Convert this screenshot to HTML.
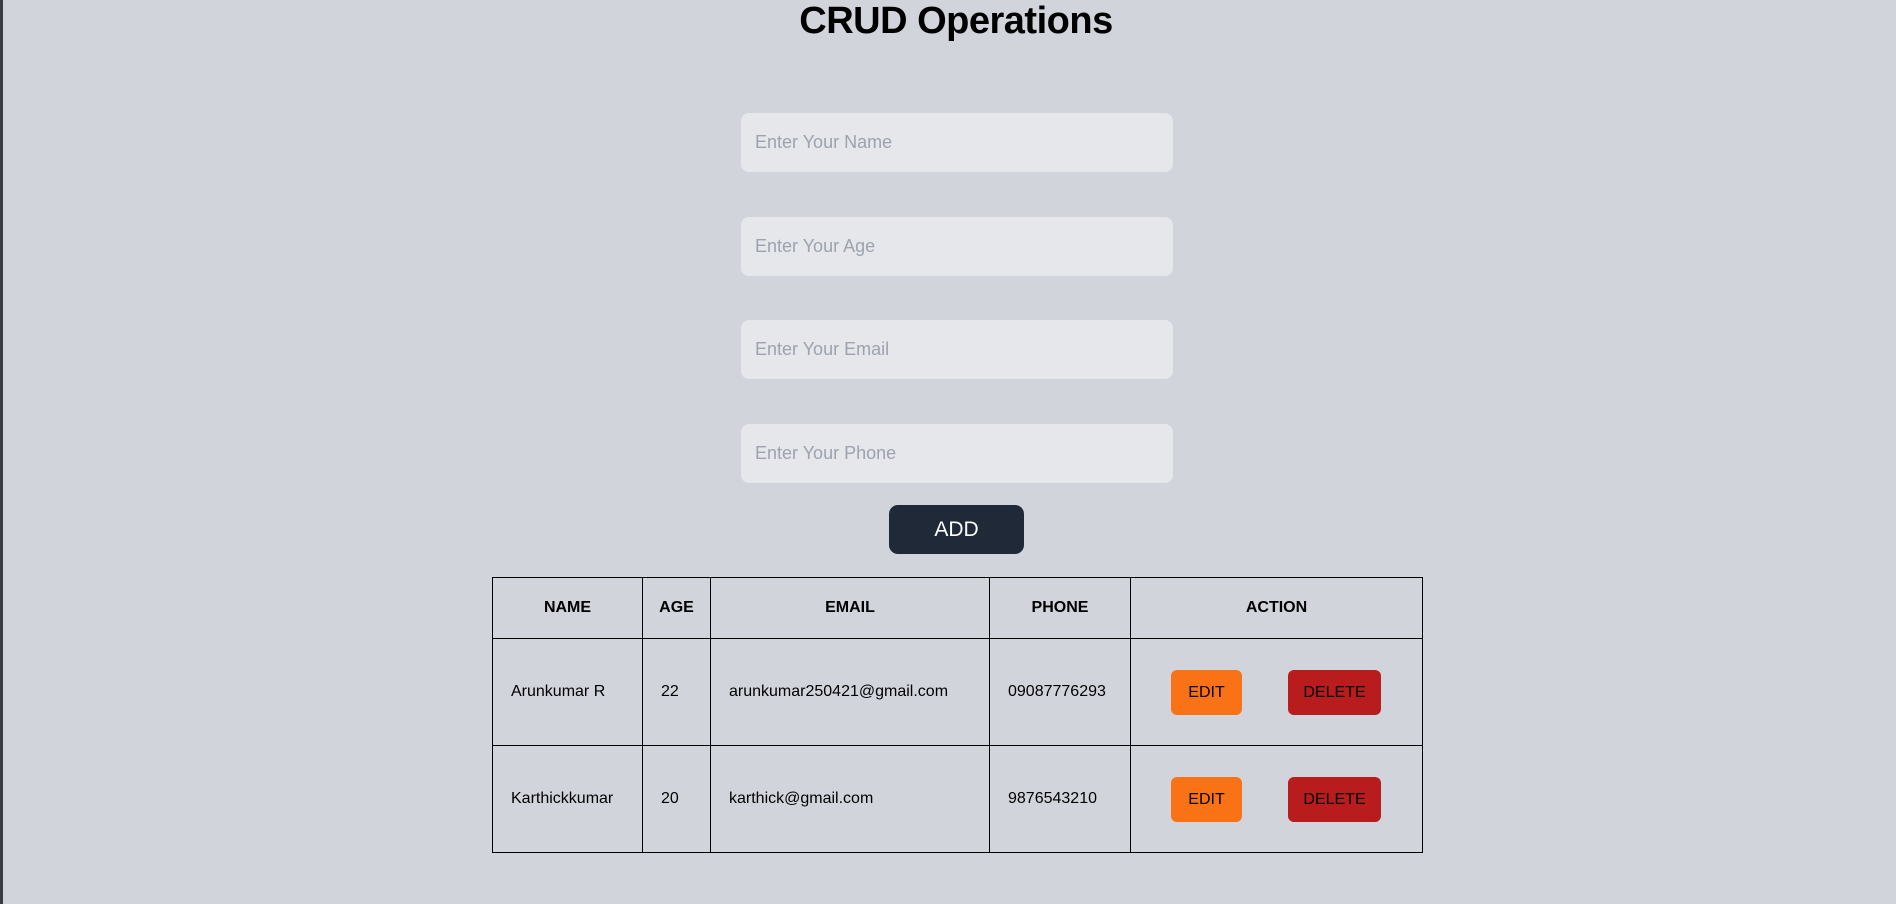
<!DOCTYPE html>
<html><head><meta charset="utf-8"><style>
html,body{margin:0;padding:0;}
body{width:1896px;height:904px;background:#d1d5db;position:relative;overflow:hidden;font-family:"Liberation Sans",sans-serif;}
.lb{position:absolute;left:0;top:0;width:3px;height:904px;background:#3a3d42;}
h1{position:absolute;left:0;width:1912px;top:0;margin:0;text-align:center;font-size:38px;font-weight:bold;line-height:42px;color:#000;letter-spacing:-0.5px;}
.in{position:absolute;left:741px;width:432px;height:59px;background:#e5e7eb;border-radius:8px;color:#9ca3af;font-size:18px;line-height:59px;text-indent:14px;}
.add{position:absolute;left:889px;top:505px;width:135px;height:49px;background:#1f2937;border-radius:9px;color:#fff;font-size:21px;line-height:49px;text-align:center;}
table{position:absolute;left:492px;top:577px;width:931px;border-collapse:collapse;}
td,th{border:1px solid #000;font-size:16px;color:#000;padding:0 0 0 18px;text-align:left;}
th{height:60px;font-weight:bold;text-align:center;padding:0;}
td{height:106px;}
.b{display:inline-block;height:45px;line-height:45px;border-radius:6px;text-align:center;font-size:16px;}
.e{background:#f97316;width:71px;margin-left:40px;}
.d{background:#b91c1c;width:93px;margin-left:46px;}
</style></head><body>
<div class="lb"></div>
<h1>CRUD Operations</h1>
<div class="in" style="top:113px">Enter Your Name</div>
<div class="in" style="top:217px">Enter Your Age</div>
<div class="in" style="top:320px">Enter Your Email</div>
<div class="in" style="top:424px">Enter Your Phone</div>
<div class="add">ADD</div>
<table>
<tr><th style="width:149px">NAME</th><th style="width:67px">AGE</th><th style="width:278px">EMAIL</th><th style="width:140px">PHONE</th><th>ACTION</th></tr>
<tr><td>Arunkumar R</td><td>22</td><td>arunkumar250421@gmail.com</td><td>09087776293</td><td style="padding:0"><span class="b e">EDIT</span><span class="b d">DELETE</span></td></tr>
<tr><td>Karthickkumar</td><td>20</td><td>karthick@gmail.com</td><td>9876543210</td><td style="padding:0"><span class="b e">EDIT</span><span class="b d">DELETE</span></td></tr>
</table>
</body></html>
